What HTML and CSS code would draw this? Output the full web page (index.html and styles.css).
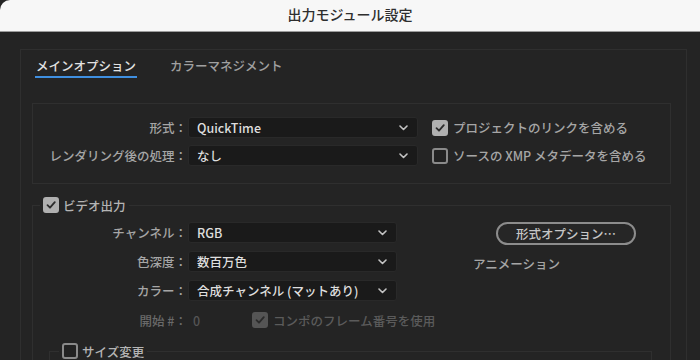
FILE: index.html
```html
<!DOCTYPE html>
<html lang="ja">

<head>
  <meta charset="UTF-8">
  <meta name="viewport" content="width=device-width, initial-scale=1.0">
  <title>出力モジュール設定</title>
  <link rel="stylesheet" href="styles.css">
</head>

<body>
  <div class="titlebar">出力モジュール設定</div>

  <div class="panel">
    <div class="tabs">
      <span class="tab active">メインオプション</span>
      <span class="tab">カラーマネジメント</span>
    </div>

    <!-- General -->
    <div class="box general">
      <div class="row">
        <span class="lbl">形式：</span>
        <div class="select">QuickTime
          <svg class="chev" width="9" height="6" viewBox="0 0 9 6"><polyline points="1,1 4.5,4.5 8,1" /></svg>
        </div>
        <label class="check"><span class="cb on"><svg width="12" height="12" viewBox="0 0 12 12"><polyline points="2.5,6.2 5,8.7 9.8,3.2" /></svg></span>プロジェクトのリンクを含める</label>
      </div>
      <div class="row">
        <span class="lbl">レンダリング後の処理：</span>
        <div class="select">なし
          <svg class="chev" width="9" height="6" viewBox="0 0 9 6"><polyline points="1,1 4.5,4.5 8,1" /></svg>
        </div>
        <label class="check"><span class="cb"></span>ソースの XMP メタデータを含める</label>
      </div>
    </div>

    <!-- Video output -->
    <fieldset class="group video">
      <legend class="legend"><span class="cb on"><svg width="12" height="12" viewBox="0 0 12 12"><polyline points="2.5,6.2 5,8.7 9.8,3.2" /></svg></span>ビデオ出力</legend>

      <div class="video-body">
        <div class="fields">
          <div class="row">
            <span class="lbl">チャンネル：</span>
            <div class="select short">RGB
              <svg class="chev" width="9" height="6" viewBox="0 0 9 6"><polyline points="1,1 4.5,4.5 8,1" /></svg>
            </div>
          </div>
          <div class="row">
            <span class="lbl">色深度：</span>
            <div class="select short">数百万色
              <svg class="chev" width="9" height="6" viewBox="0 0 9 6"><polyline points="1,1 4.5,4.5 8,1" /></svg>
            </div>
          </div>
          <div class="row">
            <span class="lbl">カラー：</span>
            <div class="select short">合成チャンネル (マットあり)
              <svg class="chev" width="9" height="6" viewBox="0 0 9 6"><polyline points="1,1 4.5,4.5 8,1" /></svg>
            </div>
          </div>
        </div>

        <div class="side">
          <button class="pill">形式オプション…</button>
          <div class="codec">アニメーション</div>
        </div>
      </div>

      <div class="row start">
        <span class="lbl">開始 #：</span>
        <span class="num">0</span>
        <label class="check disabled"><span class="cb on"><svg width="12" height="12" viewBox="0 0 12 12"><polyline points="2.5,6.2 5,8.7 9.8,3.2" /></svg></span>コンポのフレーム番号を使用</label>
      </div>

      <fieldset class="group resize">
        <legend class="legend"><span class="cb"></span>サイズ変更</legend>
      </fieldset>
    </fieldset>
  </div>
</body>

</html>
```

FILE: styles.css
```css
/* Window */
body {
  margin: 0;
  height: 360px;
  overflow: hidden;
  background: #242424;
  font-family: "Noto Sans CJK JP", "Noto Sans", sans-serif;
  font-size: 12.5px;
  font-weight: 500;
  color: #a6a6a6;
}

.titlebar {
  height: 31px;
  line-height: 29px;
  text-align: center;
  background: #f7f7f7;
  border-bottom: 1px solid #9c9c9c;
  border-top-left-radius: 10px;
  color: #2e2e2e;
  font-size: 14px;
}

.panel {
  margin: 17px 13px 0 20px;
  border: 1px solid #2f2f2f;
  height: 400px;
}

/* Tabs */
.tabs {
  display: flex;
  gap: 32px;
  padding: 8px 0 0 14px;
}

.tab {
  line-height: 16px;
  padding: 0 1px 2px;
  border-bottom: 2px solid transparent;
  color: #a0a0a0;
}

.tab.active {
  color: #e2e2e2;
  border-bottom-color: #3f8fe0;
}

/* Boxes */
.box {
  margin: 25px 15px 0 11px;
  border: 1px solid #2f2f2f;
}

.general {
  display: flex;
  flex-direction: column;
  gap: 7px;
  padding: 13px 0 17px;
}

.row {
  display: flex;
  align-items: center;
  height: 21px;
}

.lbl {
  width: 154px;
  padding-right: 1px;
  text-align: right;
  white-space: nowrap;
}

.select {
  width: 230px;
  height: 21px;
  box-sizing: border-box;
  display: flex;
  align-items: center;
  justify-content: space-between;
  padding: 0 9px 0 8px;
  background: #1a1a1a;
  border: 1px solid #292929;
  border-radius: 3px;
  color: #dedede;
  white-space: nowrap;
}

.select.short {
  width: 209px;
}

.chev polyline {
  fill: none;
  stroke: #c4c4c4;
  stroke-width: 1.6;
  stroke-linecap: round;
  stroke-linejoin: round;
}

/* Checkboxes */
.check {
  display: flex;
  align-items: center;
  gap: 5px;
  margin-left: 14px;
  white-space: nowrap;
}

.cb {
  width: 16px;
  height: 16px;
  box-sizing: border-box;
  display: inline-flex;
  align-items: center;
  justify-content: center;
  border: 2px solid #8a8a8a;
  border-radius: 3px;
  background: #222;
  flex-shrink: 0;
}

.cb.on {
  background: #b0b0b0;
  border-color: #b0b0b0;
}

.cb svg polyline {
  fill: none;
  stroke: #2c2c2c;
  stroke-width: 1.8;
  stroke-linecap: round;
  stroke-linejoin: round;
}

.check.disabled {
  color: #5b5b5b;
}

.check.disabled .cb.on {
  background: #555;
  border-color: #555;
}

.check.disabled .cb svg polyline {
  stroke: #2b2b2b;
}

/* Groups */
.group {
  border: 1px solid #2f2f2f;
  margin: 13px 15px 0 11px;
  padding: 9px 0 0;
  min-width: 0;
}

.legend {
  display: flex;
  align-items: center;
  gap: 4px;
  height: 16px;
  margin-left: 7px;
  padding: 0 3px;
  color: #b4b4b4;
}

.video-body {
  display: flex;
}

.fields {
  display: flex;
  flex-direction: column;
  gap: 8px;
}

.side {
  margin-left: 76px;
  width: 186px;
  display: flex;
  flex-direction: column;
}

.pill {
  align-self: center;
  width: 140px;
  height: 23px;
  box-sizing: border-box;
  border: 2px solid #8c8c8c;
  border-radius: 12px;
  background: #262626;
  color: #c6c6c6;
  font-family: inherit;
  font-size: 12.5px;
  font-weight: 500;
  padding: 0;
}

.codec {
  margin-top: 11px;
  line-height: 16px;
}

.start {
  margin-top: 11px;
  height: 16px;
}

.start .lbl {
  color: #6a6a6a;
}

.num {
  width: 59px;
  padding-left: 5px;
  color: #555;
}

.start .check {
  margin-left: 0;
}

.resize {
  margin: 15px 18px 0 16px;
  height: 60px;
}

.resize .legend {
  margin-left: 9px;
}
```
